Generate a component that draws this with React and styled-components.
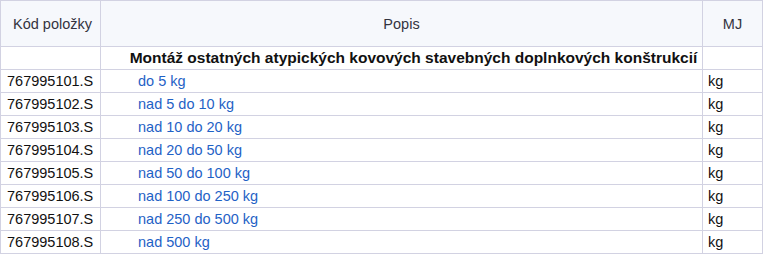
import React from "react";
import styled, { createGlobalStyle } from "styled-components";

const Global = createGlobalStyle`
  html, body { margin: 0; padding: 0; background: #ffffff; }
  body { font-family: "Liberation Sans", Arial, sans-serif; }
`;

const Table = styled.table`
  border-collapse: collapse;
  table-layout: fixed;
  width: 762px;
  font-family: "Liberation Sans", Arial, sans-serif;
  font-size: 14.5px;
  color: #111111;
`;

const HeadRow = styled.tr`
  height: 46px;
  background: #f6f8fc;
`;

const Row = styled.tr`
  height: 23px;
`;

const HeadCell = styled.th`
  border: 1px solid #d2d2e2;
  font-weight: normal;
  color: #33333f;
  text-align: center;
  padding: 0 0 0 ${(p) => p.$shift || 0}px;
  vertical-align: middle;
`;

const Cell = styled.td`
  border: 1px solid #d2d2e2;
  padding: 0 0 0 ${(p) => p.$indent || 5}px;
  vertical-align: middle;
  white-space: nowrap;
  overflow: visible;
  color: ${(p) => (p.$link ? "#1f62c6" : "#111111")};
  text-align: left;
`;

const GroupCell = styled.td`
  border: 1px solid #d2d2e2;
  padding: 0 0 0 24px;
  vertical-align: middle;
  white-space: nowrap;
  text-align: center;
  font-weight: bold;
  font-size: 15.5px;
  color: #111111;
`;

const rows = [
  ["767995101.S", "do 5 kg"],
  ["767995102.S", "nad 5 do 10 kg"],
  ["767995103.S", "nad 10 do 20 kg"],
  ["767995104.S", "nad 20 do 50 kg"],
  ["767995105.S", "nad 50 do 100 kg"],
  ["767995106.S", "nad 100 do 250 kg"],
  ["767995107.S", "nad 250 do 500 kg"],
  ["767995108.S", "nad 500 kg"],
];

export default function App() {
  return (
    <>
      <Global />
      <Table>
        <colgroup>
          <col style={{ width: 100 }} />
          <col style={{ width: 602 }} />
          <col style={{ width: 60 }} />
        </colgroup>
        <thead>
          <HeadRow>
            <HeadCell $shift={4}>Kód položky</HeadCell>
            <HeadCell>Popis</HeadCell>
            <HeadCell>MJ</HeadCell>
          </HeadRow>
        </thead>
        <tbody>
          <Row>
            <Cell />
            <GroupCell>
              Montáž ostatných atypických kovových stavebných doplnkových konštrukcií
            </GroupCell>
            <Cell />
          </Row>
          {rows.map(([code, desc]) => (
            <Row key={code}>
              <Cell $indent={6}>{code}</Cell>
              <Cell $link $indent={37}>{desc}</Cell>
              <Cell $indent={5}>kg</Cell>
            </Row>
          ))}
        </tbody>
      </Table>
    </>
  );
}
